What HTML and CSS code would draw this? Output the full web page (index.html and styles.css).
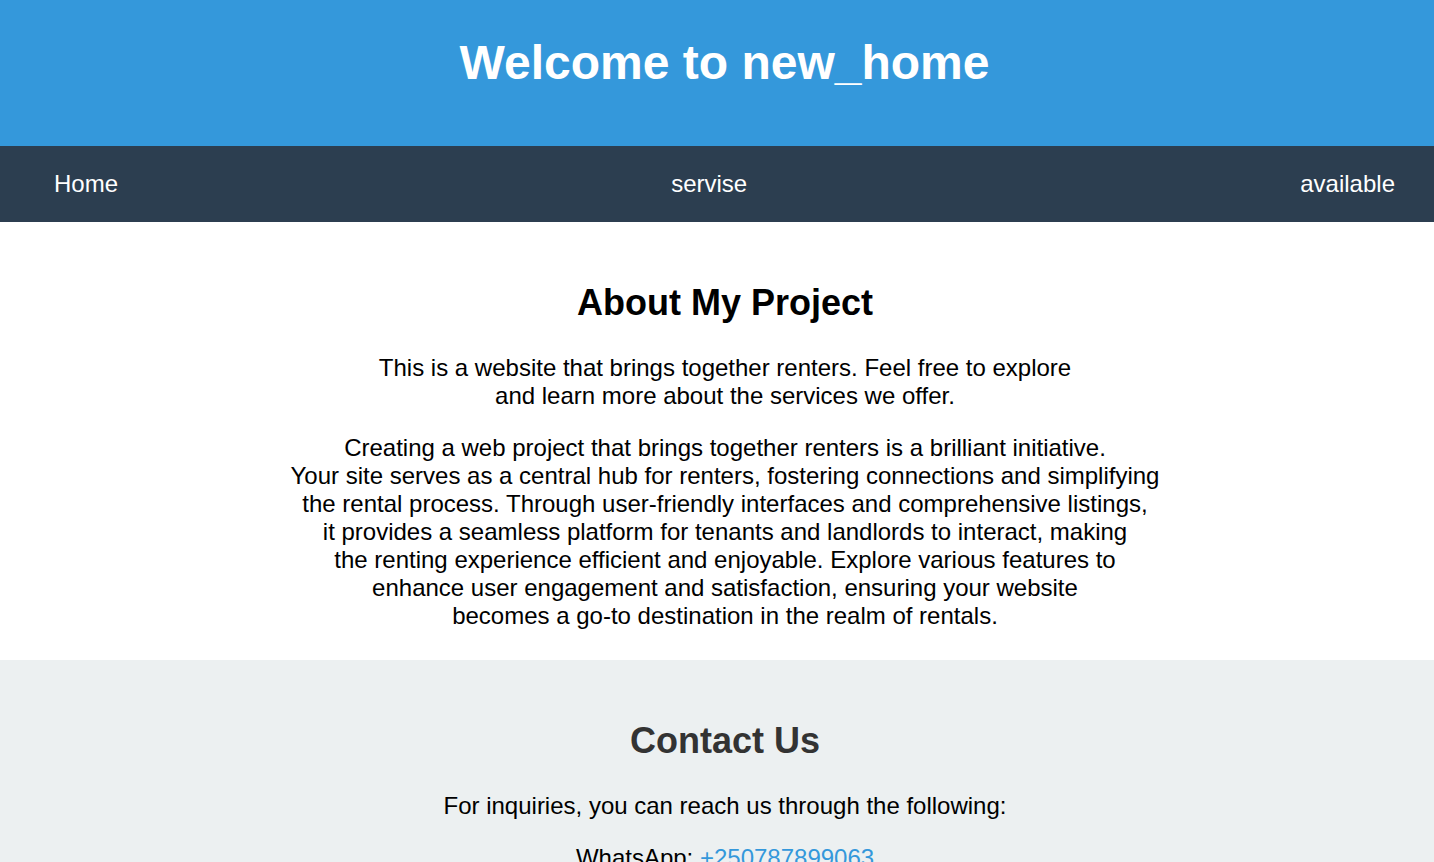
FILE: index.html
```html
<!DOCTYPE html>
<html lang="en">
<head>
<meta charset="utf-8">
<title>new_home</title>
<link rel="stylesheet" href="styles.css">
</head>
<body>
<header class="site-header">
  <h1 class="site-title">Welcome to new_home</h1>
</header>
<nav class="site-nav">
  <a class="nav-link" href="#">Home</a>
  <a class="nav-link" href="#">servise</a>
  <a class="nav-link" href="#">available</a>
</nav>
<section class="about">
  <h2 class="section-title">About My Project</h2>
  <p class="text">This is a website that brings together renters. Feel free to explore<br>and learn more about the services we offer.</p>
  <p class="text last">Creating a web project that brings together renters is a brilliant initiative.<br>Your site serves as a central hub for renters, fostering connections and simplifying<br>the rental process. Through user-friendly interfaces and comprehensive listings,<br>it provides a seamless platform for tenants and landlords to interact, making<br>the renting experience efficient and enjoyable. Explore various features to<br>enhance user engagement and satisfaction, ensuring your website<br>becomes a go-to destination in the realm of rentals.</p>
</section>
<section class="contact">
  <h2 class="section-title dark">Contact Us</h2>
  <p class="text">For inquiries, you can reach us through the following:</p>
  <p class="text">WhatsApp: <a class="contact-link" href="#">+250787899063</a></p>
</section>
</body>
</html>
```
FILE: styles.css
```css
html, body {
  margin: 0;
  padding: 0;
}
body {
  font-family: "Liberation Sans", Arial, sans-serif;
  font-size: 24px;
  color: #000;
  background: #fff;
}
.site-header {
  background: #3498db;
  padding: 35px 0 56px 15px;
  text-align: center;
}
.site-title {
  margin: 0;
  font-size: 48px;
  font-weight: bold;
  color: #fff;
}
.site-nav {
  background: #2c3e50;
  height: 76px;
  display: flex;
  align-items: center;
  justify-content: space-between;
  padding: 0 39px 0 54px;
}
.nav-link {
  color: #fff;
  text-decoration: none;
  font-size: 24px;
}
.about {
  padding: 30px 0 30px 16px;
  text-align: center;
}
.contact {
  background: #ecf0f1;
  padding: 30px 0 30px 16px;
  text-align: center;
}
.section-title {
  font-size: 36px;
  font-weight: bold;
  margin: 30px 0 30px;
  color: #000;
}
.section-title.dark {
  color: #333;
}
.text {
  margin: 24px 0;
  font-size: 24px;
}
.text.last {
  margin-bottom: 0;
}
.contact-link {
  color: #3498db;
  text-decoration: none;
}
```
